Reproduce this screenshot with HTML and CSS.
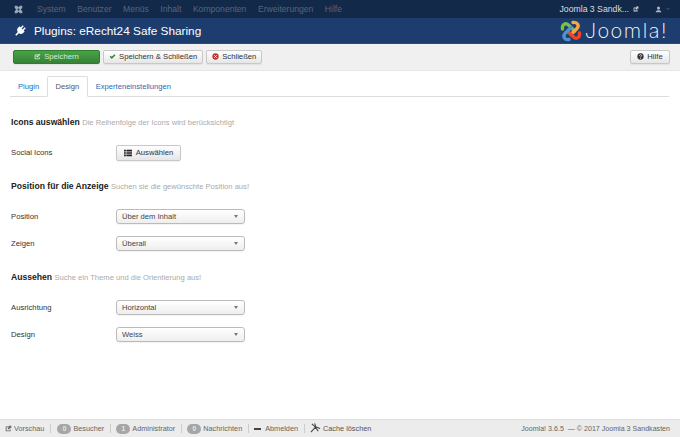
FILE: index.html
```html
<!DOCTYPE html>
<html lang="de">
<head>
<meta charset="utf-8">
<title>Plugins: eRecht24 Safe Sharing</title>
<link rel="stylesheet" href="styles.css">
</head>
<body>
<div class="page">
  <nav class="topbar">
    <svg class="brand" viewBox="0 0 12 12"><path d="M1 1h3l2 2 2-2h3v3L9 6l2 2v3H8L6 9l-2 2H1V8l2-2-2-2z" fill="#9aa7b8"/><circle cx="6" cy="6" r="1.3" fill="#13294a"/></svg>
    <ul class="menu">
      <li>System</li><li>Benutzer</li><li>Menüs</li><li>Inhalt</li><li>Komponenten</li><li>Erweiterungen</li><li>Hilfe</li>
    </ul>
    <div class="site">
      <span>Joomla 3 Sandk...</span>
      <svg class="ext" viewBox="0 0 10 10"><path d="M1 2.500h5v1.300H2.300v3.900h3.900V6h1.300v3H1z" fill="#d5dae2"/><path d="M5 1h4v4L7.700 3.800 5.300 6.200 3.800 4.700l2.400-2.400z" fill="#d5dae2"/></svg>
      <svg class="user" viewBox="0 0 10 10"><circle cx="5" cy="3" r="2.200" fill="#aeb6c4"/><path d="M1 9c0-2.500 2-3 4-3s4 .5 4 3z" fill="#aeb6c4"/></svg>
      <i class="caret-top"></i>
    </div>
  </nav>
  <header class="titlebar">
    <svg class="plug" viewBox="0 0 14 14">
      <g transform="rotate(45 7 7)" fill="#fff">
        <rect x="4.500" y="0" width="1.700" height="4"/>
        <rect x="7.800" y="0" width="1.700" height="4"/>
        <path d="M2.800 3.500h8.400v2.500c0 2.200-1.700 3.500-3.300 3.700V14H6.100V9.700C4.500 9.500 2.800 8.200 2.800 6z"/>
      </g>
    </svg>
    <h1>Plugins: eRecht24 Safe Sharing</h1>
    <div class="logo">
      <svg class="logo-mark" viewBox="0 0 24 24">
        <g fill="none" stroke-width="3.400" stroke-linecap="round">
          <g stroke="#7ac143"><path d="M3.500 10C2.800 5.500 6.500 3.500 9.500 6l6 6"/></g>
          <g stroke="#f9a541" transform="rotate(90 12 12)"><path d="M3.500 10C2.800 5.500 6.500 3.500 9.500 6l6 6"/></g>
          <g stroke="#f44321" transform="rotate(180 12 12)"><path d="M3.500 10C2.800 5.500 6.500 3.500 9.500 6l6 6"/></g>
          <g stroke="#5091cd" transform="rotate(270 12 12)"><path d="M3.500 10C2.800 5.500 6.500 3.500 9.500 6l6 6"/></g>
        </g>
      </svg>
      <span class="logo-text">Joomla!</span>
    </div>
  </header>
  <div class="toolbar">
    <button class="btn btn-save">
      <svg class="ico" viewBox="0 0 10 10"><path d="M1 2h6v1.200H2.200v4.600h4.600V6H8v3H1z" fill="#dff0d8"/><path d="M3 4.500l1.800 1.800L9 2 8 1 4.800 4.300 4 3.500z" fill="#dff0d8"/></svg>
      Speichern
    </button>
    <button class="btn">
      <svg class="ico" viewBox="0 0 10 10"><path d="M1 5.500l1.500-1.500L4 5.500 7.800 1.700 9.300 3.200 4 8.500z" fill="#378137"/></svg>
      Speichern &amp; Schließen
    </button>
    <button class="btn">
      <svg class="ico" viewBox="0 0 10 10"><circle cx="5" cy="5" r="4.500" fill="#bd362f"/><path d="M3.300 3.300l3.400 3.400M6.700 3.300l-3.400 3.400" stroke="#fff" stroke-width="1.300"/></svg>
      Schließen
    </button>
    <button class="btn btn-help">
      <svg class="ico" viewBox="0 0 10 10"><circle cx="5" cy="5" r="4.500" fill="#333"/><path d="M3.500 4c0-2 3.200-2 3.200-.2C6.700 5 5 4.800 5 6.200" fill="none" stroke="#fff" stroke-width="1.100"/><rect x="4.400" y="6.900" width="1.200" height="1.200" fill="#fff"/></svg>
      Hilfe
    </button>
  </div>
  <main class="content">
    <ul class="tabs">
      <li class="tab">Plugin</li>
      <li class="tab tab-active">Design</li>
      <li class="tab">Experteneinstellungen</li>
    </ul>
    <section class="group group-first">
      <h2 class="legend"><b>Icons auswählen</b> <span>Die Reihenfolge der Icons wird berücksichtigt</span></h2>
      <div class="row">
        <label>Social Icons</label>
        <button class="btn btn-pick">
          <svg class="ico ico-list" viewBox="0 0 10 10"><path d="M0 1h2.300v2H0zM3 1h7v2H3zM0 4h2.300v2H0zM3 4h7v2H3zM0 7h2.300v2H0zM3 7h7v2H3z" fill="#222"/></svg>
          Auswählen
        </button>
      </div>
    </section>
    <section class="group group-middle">
      <h2 class="legend"><b>Position für die Anzeige</b> <span>Suchen sie die gewünschte Position aus!</span></h2>
      <div class="row"><label>Position</label><div class="select">Über dem Inhalt<i></i></div></div>
      <div class="row"><label>Zeigen</label><div class="select">Überall<i></i></div></div>
    </section>
    <section class="group group-last">
      <h2 class="legend"><b>Aussehen</b> <span>Suche ein Theme und die Orientierung aus!</span></h2>
      <div class="row"><label>Ausrichtung</label><div class="select">Horizontal<i></i></div></div>
      <div class="row"><label>Design</label><div class="select">Weiss<i></i></div></div>
    </section>
  </main>
  <footer class="status">
    <div class="status-left">
      <span class="item item-preview"><svg class="ico" viewBox="0 0 10 10"><path d="M1 2h5v1.200H2.200v4.600h4.600V6H8v3H1z" fill="#666"/><path d="M5 1h4v4L7.800 3.800 5.300 6.300 3.700 4.700l2.500-2.500z" fill="#666"/></svg>Vorschau</span>
      <span class="item"><b class="badge">0</b>Besucher</span>
      <span class="item"><b class="badge">1</b>Administrator</span>
      <span class="item"><b class="badge">0</b>Nachrichten</span>
      <span class="item"><i class="minus"></i>Abmelden</span>
      <span class="item item-cache"><svg class="ico-cache" viewBox="0 0 12 12"><path d="M1 11L6 5.500M5 1.500l1.500 4L11 7M2 2l4 3.500M6 6l3 4" fill="none" stroke="#444" stroke-width="1.100"/></svg>Cache löschen</span>
    </div>
    <div class="copy">Joomla! 3.6.5 &nbsp;— © 2017 Joomla 3 Sandkasten</div>
  </footer>
</div>
</body>
</html>
```

FILE: styles.css
```css
* { box-sizing: border-box; }
html, body { margin: 0; padding: 0; }
body {
  font-family: "Liberation Sans", Arial, sans-serif;
  font-size: 8px;
  color: #333;
  background: #fff;
}
.page {
  width: 680px;
  height: 437px;
  display: flex;
  flex-direction: column;
  overflow: hidden;
}

/* top navigation */
.topbar {
  height: 18px;
  background: #13294a;
  display: flex;
  align-items: center;
  padding: 0 10px 0 14px;
  flex: none;
}
.brand { width: 9px; height: 9px; flex: none; }
.menu {
  list-style: none;
  display: flex;
  gap: 11.500px;
  margin: 0 0 0 14px;
  padding: 0;
  color: #56657c;
  font-size: 8.600px;
}
.site {
  margin-left: auto;
  display: flex;
  align-items: center;
  color: #d5dae2;
  font-size: 8.700px;
}
.ext { width: 6px; height: 6px; margin-left: 4px; }
.user { width: 7px; height: 7px; margin-left: 16px; }
.caret-top {
  width: 0;
  height: 0;
  margin-left: 4px;
  border: 2px solid transparent;
  border-top-color: #3c4a60;
  border-bottom: 0;
}

/* title bar */
.titlebar {
  height: 26px;
  background: #1c3d6e;
  border-bottom: 1px solid #2d4a78;
  display: flex;
  align-items: center;
  padding-left: 14px;
  flex: none;
}
.plug { width: 12px; height: 12px; flex: none; }
.titlebar h1 {
  margin: 0 0 0 8px;
  color: #fff;
  font-size: 11.800px;
  font-weight: 400;
}
.logo {
  margin-left: auto;
  margin-right: 12px;
  display: flex;
  align-items: center;
}
.logo-mark { width: 24px; height: 24px; }
.logo-text {
  margin-left: 2px;
  font-family: "Inter", "Liberation Sans", sans-serif;
  font-weight: 200;
  font-size: 20px;
  letter-spacing: 1.500px;
  line-height: 22px;
  color: #fff;
}

/* toolbar */
.toolbar {
  height: 27px;
  background: #f0f0f0;
  border-bottom: 1px solid #e6e6e6;
  display: flex;
  align-items: center;
  padding: 0 10px 1px 13px;
  gap: 3px;
  flex: none;
}
.btn {
  height: 14px;
  padding: 0 5px;
  display: inline-flex;
  align-items: center;
  justify-content: center;
  gap: 3px;
  font: inherit;
  font-size: 7.700px;
  color: #333;
  background: linear-gradient(#ffffff, #e6e6e6);
  border: 1px solid #c8c8c8;
  border-radius: 2px;
  box-shadow: 0 1px 1px rgba(0, 0, 0, .06);
  white-space: nowrap;
}
.ico { width: 7px; height: 7px; flex: none; }
.btn-save {
  width: 87px;
  background: linear-gradient(#46a546, #378137);
  border-color: #2f7d32;
  color: #d6ecd6;
}
.btn-help { margin-left: auto; width: 40px; padding: 0 2px; }

/* content */
.content {
  flex: 1;
  padding: 5px 11px 0 10px;
  min-height: 0;
}
.tabs {
  list-style: none;
  display: flex;
  height: 21px;
  margin: 0;
  padding: 0;
  border-bottom: 1px solid #ddd;
  color: #2a69b8;
  font-size: 7.600px;
}
.tab {
  padding: 0 7px;
  line-height: 20px;
  height: 21px;
  border: 1px solid transparent;
}
.tab-active {
  padding: 0 7.500px;
  color: #555;
  background: #fff;
  border-color: #ddd #ddd #fff;
  border-radius: 2px 2px 0 0;
}
.group { margin-top: 20px; padding-left: 1px; }
.legend {
  margin: 0 0 16px;
  font-size: 8.600px;
  font-weight: 400;
  line-height: 11px;
  color: #aaa;
}
.legend b { color: #222; font-weight: 700; }
.legend span { font-size: 7.600px; }
.row {
  display: flex;
  align-items: center;
  height: 17px;
  margin-bottom: 10px;
}
.row:last-child { margin-bottom: 0; }
.row label { width: 105px; font-size: 7.700px; color: #333; flex: none; }
.btn-pick {
  width: 65px;
  height: 16px;
  font-size: 7.700px;
  gap: 4px;
}
.ico-list { width: 8px; height: 8px; }
.select {
  position: relative;
  width: 129px;
  height: 15px;
  padding-left: 5px;
  line-height: 13px;
  font-size: 7.600px;
  color: #444;
  background: linear-gradient(#fff, #eee);
  border: 1px solid #bbb;
  border-radius: 3px;
  box-shadow: 0 1px 1px rgba(0, 0, 0, .05);
}
.select i {
  position: absolute;
  right: 6px;
  top: 5px;
  width: 0;
  height: 0;
  border: 2px solid transparent;
  border-top: 3px solid #777;
  border-bottom: 0;
}

/* status bar */
.status {
  height: 18px;
  flex: none;
  background: #ececec;
  border-top: 1px solid #ddd;
  display: flex;
  align-items: center;
  justify-content: space-between;
  padding: 0 10px 0 5px;
  font-size: 7.300px;
  color: #666;
}
.status-left { display: flex; align-items: center; }
.item {
  display: inline-flex;
  align-items: center;
  gap: 2px;
  height: 9px;
  padding-right: 6px;
  margin-right: 5px;
  border-right: 1px solid #ccc;
}
.item-preview { gap: 2px; margin-right: 6px; }
.item:last-child { border-right: 0; margin: 0; padding: 0; }
.badge {
  width: 14px;
  height: 10px;
  border-radius: 5px;
  background: #a6a6a6;
  color: #e8e8e8;
  font-size: 6.500px;
  font-weight: 700;
  line-height: 10px;
  text-align: center;
}
.minus { width: 7px; height: 2px; background: #444; margin-right: 2px; }
.ico-cache { width: 11px; height: 11px; margin-top: -3px; }
.item-cache { height: auto; gap: 2px; color: #555; font-size: 7.300px; }
.copy { color: #666; font-size: 7.100px; }
```
